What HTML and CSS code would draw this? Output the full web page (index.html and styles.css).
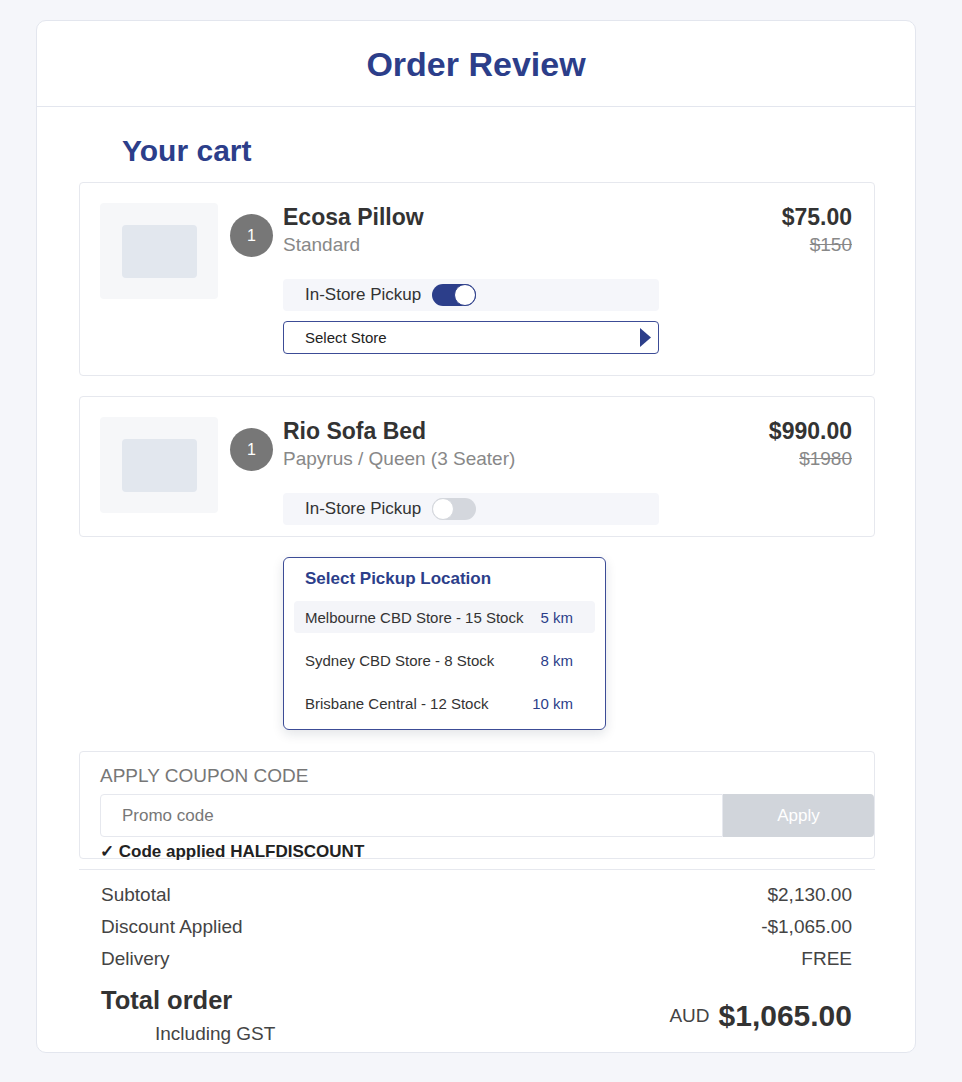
FILE: index.html
```html
<!DOCTYPE html>
<html lang="en">
<head>
<meta charset="utf-8">
<title>Order Review</title>
<link rel="stylesheet" href="styles.css">
</head>
<body>
<div class="page">
  <section class="review">
    <header class="review__header"><h1 class="review__title">Order Review</h1></header>
    <div class="review__body">
      <h2 class="cart-title">Your cart</h2>

      <article class="item">
        <div class="item__thumb"><div class="item__thumb-inner"></div></div>
        <div class="item__qty">1</div>
        <div class="item__main">
          <div class="item__top">
            <div class="item__names">
              <div class="item__name">Ecosa Pillow</div>
              <div class="item__variant">Standard</div>
            </div>
            <div class="item__prices">
              <div class="item__price">$75.00</div>
              <div class="item__old">$150</div>
            </div>
          </div>
          <div class="pickup">
            <span class="pickup__label">In-Store Pickup</span>
            <span class="toggle toggle--on"><span class="toggle__knob"></span></span>
          </div>
          <div class="select-store">
            <span>Select Store</span>
            <svg class="select-store__arrow" width="11" height="19" viewBox="0 0 11 19"><path d="M0 0 L11 9.5 L0 19 Z" fill="#2c3e8a"/></svg>
          </div>
        </div>
      </article>

      <article class="item item--compact">
        <div class="item__thumb"><div class="item__thumb-inner"></div></div>
        <div class="item__qty">1</div>
        <div class="item__main">
          <div class="item__top">
            <div class="item__names">
              <div class="item__name">Rio Sofa Bed</div>
              <div class="item__variant">Papyrus / Queen (3 Seater)</div>
            </div>
            <div class="item__prices">
              <div class="item__price">$990.00</div>
              <div class="item__old">$1980</div>
            </div>
          </div>
          <div class="pickup">
            <span class="pickup__label">In-Store Pickup</span>
            <span class="toggle toggle--off"><span class="toggle__knob"></span></span>
          </div>
        </div>
      </article>

      <div class="pickup-menu">
        <div class="pickup-menu__title">Select Pickup Location</div>
        <div class="pickup-menu__row pickup-menu__row--active"><span>Melbourne CBD Store - 15 Stock</span><span class="pickup-menu__dist">5 km</span></div>
        <div class="pickup-menu__row"><span>Sydney CBD Store - 8 Stock</span><span class="pickup-menu__dist">8 km</span></div>
        <div class="pickup-menu__row"><span>Brisbane Central - 12 Stock</span><span class="pickup-menu__dist">10 km</span></div>
      </div>

      <div class="coupon">
        <div class="coupon__label">APPLY COUPON CODE</div>
        <div class="coupon__row">
          <input class="coupon__input" type="text" placeholder="Promo code">
          <button class="coupon__btn" type="button">Apply</button>
        </div>
        <div class="coupon__note">✓ Code applied HALFDISCOUNT</div>
      </div>

      <div class="totals">
        <div class="totals__row"><span>Subtotal</span><span>$2,130.00</span></div>
        <div class="totals__row"><span>Discount Applied</span><span>-$1,065.00</span></div>
        <div class="totals__row"><span>Delivery</span><span>FREE</span></div>
        <div class="totals__grand">
          <div>
            <div class="totals__label">Total order</div>
            <div class="totals__gst">Including GST</div>
          </div>
          <div class="totals__amount">
            <span class="totals__cur">AUD</span>
            <span class="totals__value">$1,065.00</span>
          </div>
        </div>
      </div>
    </div>
  </section>
</div>
</body>
</html>
```

FILE: styles.css
```css
* { box-sizing: border-box; }
html, body { margin: 0; }
body {
  background: #f5f6fa;
  font-family: "Liberation Sans", Arial, Helvetica, sans-serif;
  color: #333;
}
.page { padding: 20px 0 0 36px; }
.review {
  width: 880px;
  background: #fff;
  border: 1px solid #e3e6ee;
  border-radius: 10px;
}
.review__header {
  height: 86px;
  border-bottom: 1px solid #e3e6ee;
  display: flex;
  align-items: center;
  justify-content: center;
}
.review__title {
  margin: 0;
  font-size: 34px;
  line-height: 40px;
  font-weight: 700;
  color: #2c3e8a;
}
.review__body { padding: 0 40px 6px 42px; }
.cart-title {
  margin: 26px 0 13px 43px;
  font-size: 30px;
  line-height: 36px;
  font-weight: 700;
  color: #2c3e8a;
}

.item {
  display: flex;
  border: 1px solid #e6e8ee;
  border-radius: 4px;
  padding: 20px 22px 21px 20px;
}
.item + .item { margin-top: 20px; }
.item--compact { padding-bottom: 11px; }
.item__thumb {
  width: 118px;
  height: 96px;
  flex: none;
  background: #f6f7f9;
  border-radius: 4px;
  display: flex;
  align-items: center;
  justify-content: center;
}
.item__thumb-inner {
  width: 75px;
  height: 53px;
  background: #e2e7ee;
  border-radius: 4px;
}
.item__qty {
  width: 43px;
  height: 43px;
  flex: none;
  margin: 11px 10px 0 12px;
  border-radius: 50%;
  background: #777;
  color: #fff;
  font-size: 16px;
  display: flex;
  align-items: center;
  justify-content: center;
}
.item__main { flex: 1; min-width: 0; }
.item__top { display: flex; justify-content: space-between; }
.item__name { font-size: 23px; line-height: 28px; font-weight: 700; color: #333; }
.item__variant { font-size: 19px; line-height: 28px; color: #888; }
.item__prices { text-align: right; }
.item__price { font-size: 23px; line-height: 28px; font-weight: 700; color: #333; }
.item__old { font-size: 19px; line-height: 28px; color: #888; text-decoration: line-through; }

.pickup {
  width: 376px;
  height: 32px;
  margin-top: 20px;
  background: #f5f6fa;
  border-radius: 4px;
  display: flex;
  align-items: center;
  gap: 11px;
  padding-left: 22px;
}
.pickup__label { font-size: 17px; color: #333; }
.toggle {
  width: 44px;
  height: 22px;
  border-radius: 11px;
  display: flex;
  align-items: center;
}
.toggle--on { background: #2c3e8a; justify-content: flex-end; }
.toggle--off { background: #d4d7dd; justify-content: flex-start; }
.toggle__knob {
  width: 22px;
  height: 22px;
  border-radius: 50%;
  background: #fff;
  border: 1.5px solid #2c3e8a;
}
.toggle--off .toggle__knob { border-color: #d4d7dd; }

.select-store {
  width: 376px;
  height: 33px;
  margin-top: 10px;
  border: 1px solid #3c4c96;
  border-radius: 4px;
  display: flex;
  align-items: center;
  justify-content: space-between;
  padding: 0 7px 0 21px;
  font-size: 15px;
  color: #222;
}
.select-store__arrow { display: block; }

.pickup-menu {
  width: 323px;
  margin: 20px 0 0 204px;
  padding: 10px;
  background: #fff;
  border: 1px solid #3c4c96;
  border-radius: 6px;
  box-shadow: 0 4px 12px rgba(20, 30, 60, 0.12);
}
.pickup-menu__title {
  font-size: 17px;
  line-height: 22px;
  font-weight: 700;
  color: #2c3e8a;
  padding-left: 11px;
  margin-bottom: 11px;
}
.pickup-menu__row {
  height: 32px;
  display: flex;
  align-items: center;
  justify-content: space-between;
  padding: 0 22px 0 11px;
  font-size: 15px;
  color: #333;
  border-radius: 4px;
}
.pickup-menu__row + .pickup-menu__row { margin-top: 11px; }
.pickup-menu__row--active { background: #f4f5f9; }
.pickup-menu__dist { color: #2c3e8a; }

.coupon {
  height: 108px;
  margin-top: 21px;
  border: 1px solid #e6e8ee;
  border-radius: 4px;
  padding: 12px 20px 0 20px;
}
.coupon__label { font-size: 19px; line-height: 24px; color: #777; }
.coupon__row {
  display: flex;
  height: 43px;
  margin: 6px -20px 0 0;
}
.coupon__input {
  flex: 1;
  min-width: 0;
  border: 1px solid #e6e8ee;
  border-radius: 4px 0 0 4px;
  padding: 0 0 0 21px;
  font-family: inherit;
  font-size: 17px;
  color: #333;
  outline: none;
}
.coupon__input::placeholder { color: #777; }
.coupon__btn {
  width: 151px;
  flex: none;
  border: none;
  border-radius: 0 4px 4px 0;
  background: #d1d5db;
  color: #fff;
  font-family: inherit;
  font-size: 17px;
}
.coupon__note {
  margin-top: 5px;
  font-size: 17px;
  line-height: 20px;
  font-weight: 700;
  color: #222;
}

.totals {
  margin-top: 10px;
  border-top: 1px solid #e6e8ee;
  padding: 9px 23px 0 22px;
}
.totals__row {
  display: flex;
  justify-content: space-between;
  font-size: 19px;
  line-height: 32px;
  color: #444;
}
.totals__grand {
  display: flex;
  justify-content: space-between;
  align-items: center;
  margin-top: 10px;
}
.totals__label { font-size: 25.5px; line-height: 30px; font-weight: 700; color: #333; }
.totals__gst { font-size: 19px; line-height: 24px; margin-top: 7px; padding-left: 54px; color: #444; }
.totals__amount { display: flex; align-items: center; gap: 9px; }
.totals__cur { font-size: 19px; color: #444; }
.totals__value { font-size: 30px; font-weight: 700; color: #333; }
```
